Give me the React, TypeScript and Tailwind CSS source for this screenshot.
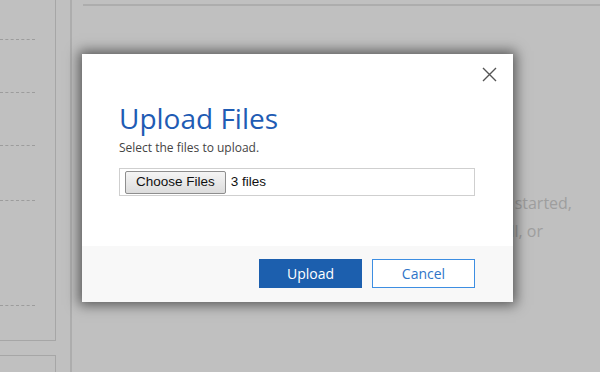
import React from "react";

export default function App() {
  const dashes = [39, 92, 145, 200, 305];
  return (
    <div className="relative w-[600px] h-[372px] overflow-hidden bg-[#c0c0c0] font-['Open_Sans',sans-serif]">
      <div className="flex h-full">
        {/* left sidebar */}
        <div className="w-[56px] flex flex-col">
          <div className="relative h-[341px] border-r border-b border-[#a6a6a6]">
            {dashes.map((y) => (
              <div
                key={y}
                className="absolute left-0 w-[35px] border-t border-dashed border-[#9c9c9c]"
                style={{ top: y }}
              />
            ))}
          </div>
          <div className="mt-[14px] flex-1 border-t border-r border-[#a6a6a6]" />
        </div>
        <div className="w-[14px]" />
        <div className="w-[2px] h-full bg-[#adadad]" />
        {/* main */}
        <div className="flex-1 pl-[11px]">
          <div className="mt-[4px] h-[2px] bg-[#adadad]" />
          <div className="mt-[183px] text-[16px] leading-[28px] text-[#9e9e9e] whitespace-nowrap">
            <div className="w-[489px] text-right">To get started,</div>
            <div className="w-[460px] text-right">install, or</div>
          </div>
        </div>
      </div>

      {/* dialog */}
      <div className="absolute left-[82px] top-[54px] w-[431px] h-[248px] bg-white flex flex-col shadow-[0_0_12px_3px_rgba(0,0,0,0.55)]">
        <div className="relative flex-1 pl-[37px] pr-[38px]">
          <svg
            className="absolute right-[16px] top-[13px]"
            width="15"
            height="15"
            viewBox="0 0 15 15"
          >
            <path d="M1 1L14 14M14 1L1 14" stroke="#555" strokeWidth="1.4" />
          </svg>
          <div className="pt-[50px] text-[28px] leading-[28px] text-[#1f5cb4]">
            Upload Files
          </div>
          <div className="mt-[8px] text-[12px] leading-[16px] text-[#444]">
            Select the files to upload.
          </div>
          <div className="mt-[12px] h-[28px] border border-[#cfcfcf] flex items-center pl-[5px]">
            <div className="h-[23px] px-[10px] flex items-center border border-[#8e8e8e] rounded-[2px] bg-gradient-to-b from-[#f5f5f5] to-[#dcdcdc] text-[13.5px] text-[#111] font-['Liberation_Sans',sans-serif]">
              Choose Files
            </div>
            <span className="ml-[5px] text-[13.5px] text-[#111] font-['Liberation_Sans',sans-serif]">
              3 files
            </span>
          </div>
        </div>
        <div className="h-[56px] bg-[#f8f8f8] flex justify-end items-start pt-[13px] pr-[38px] gap-[10px]">
          <div className="w-[103px] h-[29px] bg-[#1c5fae] text-white text-[14px] flex items-center justify-center">
            Upload
          </div>
          <div className="w-[103px] h-[29px] bg-white border border-[#3d8ee2] text-[#2f74c8] text-[14px] flex items-center justify-center">
            Cancel
          </div>
        </div>
      </div>
    </div>
  );
}
